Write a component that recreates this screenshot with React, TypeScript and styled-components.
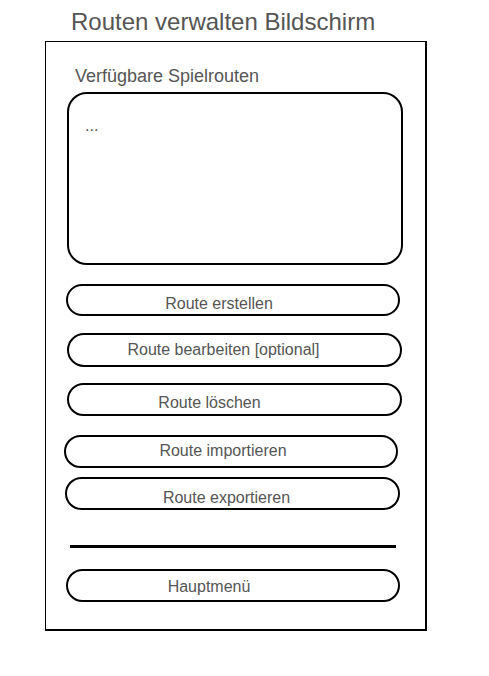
import React from "react";
import styled, { createGlobalStyle } from "styled-components";

const Global = createGlobalStyle`
  html, body { margin: 0; padding: 0; background: #ffffff; }
  body { font-family: "Liberation Sans", Arial, sans-serif; color: #555555; }
  * { box-sizing: border-box; }
`;

const Page = styled.div`
  width: 489px;
  height: 676px;
  background: #ffffff;
  display: flex;
  flex-direction: column;
`;

const Title = styled.h1`
  margin: 8px 0 0 71px;
  font-size: 24px;
  line-height: 28px;
  font-weight: normal;
  color: #555555;
`;

const Frame = styled.div`
  margin: 5px 0 0 45px;
  width: 382px;
  height: 590px;
  border-style: solid;
  border-color: #000000;
  border-width: 1px 2px 2px 1px;
  display: flex;
  flex-direction: column;
  padding-top: 24px;
`;

const Label = styled.div`
  margin-left: 29px;
  font-size: 18px;
  line-height: 20px;
  color: #555555;
`;

const ListBox = styled.div`
  margin: 6px 0 0 21px;
  width: 336px;
  height: 173px;
  border: 2px solid #000000;
  border-radius: 20px;
  padding: 23px 0 0 16px;
  font-size: 16px;
  line-height: 18px;
  color: #555555;
`;

const Pill = styled.div<{
  $top: number;
  $left: number;
  $width: number;
  $height: number;
  $shift: number;
  $dy: number;
}>`
  margin-top: ${(p) => p.$top}px;
  margin-left: ${(p) => p.$left}px;
  width: ${(p) => p.$width}px;
  height: ${(p) => p.$height}px;
  border: 2px solid #000000;
  border-radius: 17px;
  display: flex;
  align-items: center;
  justify-content: center;
  padding-top: ${(p) => Math.max(0, p.$dy * 2)}px;
  padding-bottom: ${(p) => Math.max(0, -p.$dy * 2)}px;
  padding-left: ${(p) => (p.$shift < 0 ? 0 : p.$shift * 2)}px;
  padding-right: ${(p) => (p.$shift < 0 ? -p.$shift * 2 : 0)}px;
  font-size: 16px;
  line-height: 18px;
  color: #555555;
`;

const Divider = styled.div`
  margin: 35px 0 0 24px;
  width: 326px;
  height: 3px;
  background: #000000;
`;

type Btn = { label: string; top: number; left: number; width: number; height: number; shift: number; dy: number };

const buttons: Btn[] = [
  { label: "Route erstellen", top: 19, left: 20, width: 334, height: 32, shift: -14, dy: 3.5 },
  { label: "Route bearbeiten [optional]", top: 17, left: 21, width: 335, height: 34, shift: -11, dy: 0 },
  { label: "Route löschen", top: 16, left: 21, width: 335, height: 33, shift: -25, dy: 3.5 },
  { label: "Route importieren", top: 19, left: 18, width: 334, height: 33, shift: -8, dy: -0.5 },
  { label: "Route exportieren", top: 9, left: 19, width: 335, height: 33, shift: -6, dy: 4 },
];

export default function App() {
  return (
    <Page>
      <Global />
      <Title>Routen verwalten Bildschirm</Title>
      <Frame>
        <Label>Verfügbare Spielrouten</Label>
        <ListBox>...</ListBox>
        {buttons.map((b) => (
          <Pill
            key={b.label}
            $top={b.top}
            $left={b.left}
            $width={b.width}
            $height={b.height}
            $shift={b.shift}
            $dy={b.dy}
          >
            {b.label}
          </Pill>
        ))}
        <Divider />
        <Pill $top={21} $left={20} $width={334} $height={33} $shift={-24} $dy={1.5}>
          Hauptmenü
        </Pill>
      </Frame>
    </Page>
  );
}
